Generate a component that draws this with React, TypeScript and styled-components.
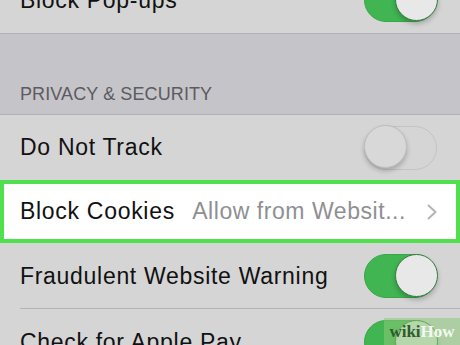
import React from "react";
import styled, { createGlobalStyle } from "styled-components";

const GlobalStyle = createGlobalStyle`
  html, body {
    margin: 0;
    padding: 0;
    background: #d5d5d5;
    overflow: hidden;
  }
  body {
    font-family: "Liberation Sans", Arial, sans-serif;
    -webkit-font-smoothing: antialiased;
  }
`;

const Screen = styled.div`
  width: 460px;
  height: 345px;
  overflow: hidden;
  position: relative;
`;

const List = styled.div`
  margin-top: -33px;
  display: flex;
  flex-direction: column;
`;

const Row = styled.div<{ $h: number; $line?: "full" | "inset" | "none"; $highlight?: boolean }>`
  position: relative;
  box-sizing: border-box;
  height: ${(p) => p.$h}px;
  display: flex;
  align-items: center;
  justify-content: space-between;
  padding: ${(p) => (p.$highlight ? "0 19px 0 16px" : "0 23px 0 20px")};
  background: ${(p) => (p.$highlight ? "#ffffff" : "#d5d5d5")};
  border: ${(p) => (p.$highlight ? "4px solid #50e04e" : "none")};
  border-bottom: ${(p) =>
    p.$highlight ? "4px solid #50e04e" : p.$line === "full" ? "1px solid #b1b1b4" : "none"};
  ${(p) =>
    p.$line === "inset"
      ? `&::after {
    content: "";
    position: absolute;
    left: 20px;
    right: 0;
    bottom: 0;
    height: 1px;
    background: #b4b4b7;
  }`
      : ""}
`;

const Label = styled.span`
  font-size: 23px;
  letter-spacing: 0.7px;
  color: #111111;
  white-space: nowrap;
`;

const Detail = styled.div`
  display: flex;
  align-items: center;
  gap: 21px;
`;

const Value = styled.span`
  font-size: 23px;
  letter-spacing: 0.55px;
  color: #8f8f93;
  white-space: nowrap;
`;

const SectionHeader = styled.div`
  box-sizing: border-box;
  height: 81px;
  background: #c5c4c9;
  border-bottom: 1px solid #b1b1b4;
  display: flex;
  align-items: flex-end;
  padding: 0 20px 11px;
  font-size: 18px;
  line-height: 18px;
  letter-spacing: 0.1px;
  color: #5b5b60;
`;

const Track = styled.div<{ $on: boolean }>`
  box-sizing: border-box;
  position: relative;
  width: 73px;
  height: 44px;
  border-radius: 22px;
  background: ${(p) => (p.$on ? "#41b552" : "#d5d5d5")};
  border: 1.5px solid ${(p) => (p.$on ? "#3aa64a" : "#c3c3c3")};
  flex-shrink: 0;
`;

const Knob = styled.div<{ $on: boolean }>`
  box-sizing: border-box;
  position: absolute;
  top: -1.5px;
  left: ${(p) => (p.$on ? "29.5px" : "-1.5px")};
  width: 43px;
  height: 43px;
  border-radius: 50%;
  background: ${(p) => (p.$on ? "#e8e8e8" : "#d8d8d8")};
  border: 1px solid ${(p) => (p.$on ? "#2f7f3b" : "#bdbdbd")};
  box-shadow: 0 3px 5px rgba(0, 0, 0, 0.22);
`;

const Watermark = styled.div`
  position: absolute;
  right: 0;
  bottom: 0;
  width: 76px;
  height: 27px;
  background: rgba(140, 200, 120, 0.55);
  display: flex;
  align-items: center;
  justify-content: center;
  font-family: "Liberation Serif", "Times New Roman", serif;
  font-weight: bold;
  font-size: 17px;
`;

const Wiki = styled.span`
  color: #2f5b2a;
`;

const How = styled.span`
  color: #f4f8f0;
`;

const Toggle = ({ on }: { on: boolean }) => (
  <Track $on={on}>
    <Knob $on={on} />
  </Track>
);

const Chevron = () => (
  <svg width="10" height="16" viewBox="0 0 10 16">
    <path d="M1.5 1.5 L8.5 8 L1.5 14.5" fill="none" stroke="#b4b4b8" strokeWidth="2" strokeLinecap="round" strokeLinejoin="round" />
  </svg>
);

export default function App() {
  return (
    <>
      <GlobalStyle />
      <Screen>
        <List>
          <Row $h={67} $line="full">
            <Label>Block Pop-ups</Label>
            <Toggle on />
          </Row>
          <SectionHeader>PRIVACY &amp; SECURITY</SectionHeader>
          <Row $h={65}>
            <Label>Do Not Track</Label>
            <Toggle on={false} />
          </Row>
          <Row $h={63} $highlight>
            <Label>Block Cookies</Label>
            <Detail>
              <Value>Allow from Websit...</Value>
              <Chevron />
            </Detail>
          </Row>
          <Row $h={66} $line="inset">
            <Label>Fraudulent Website Warning</Label>
            <Toggle on />
          </Row>
          <Row $h={66}>
            <Label>Check for Apple Pay</Label>
            <Toggle on />
          </Row>
        </List>
        <Watermark>
          <Wiki>wiki</Wiki>
          <How>How</How>
        </Watermark>
      </Screen>
    </>
  );
}
